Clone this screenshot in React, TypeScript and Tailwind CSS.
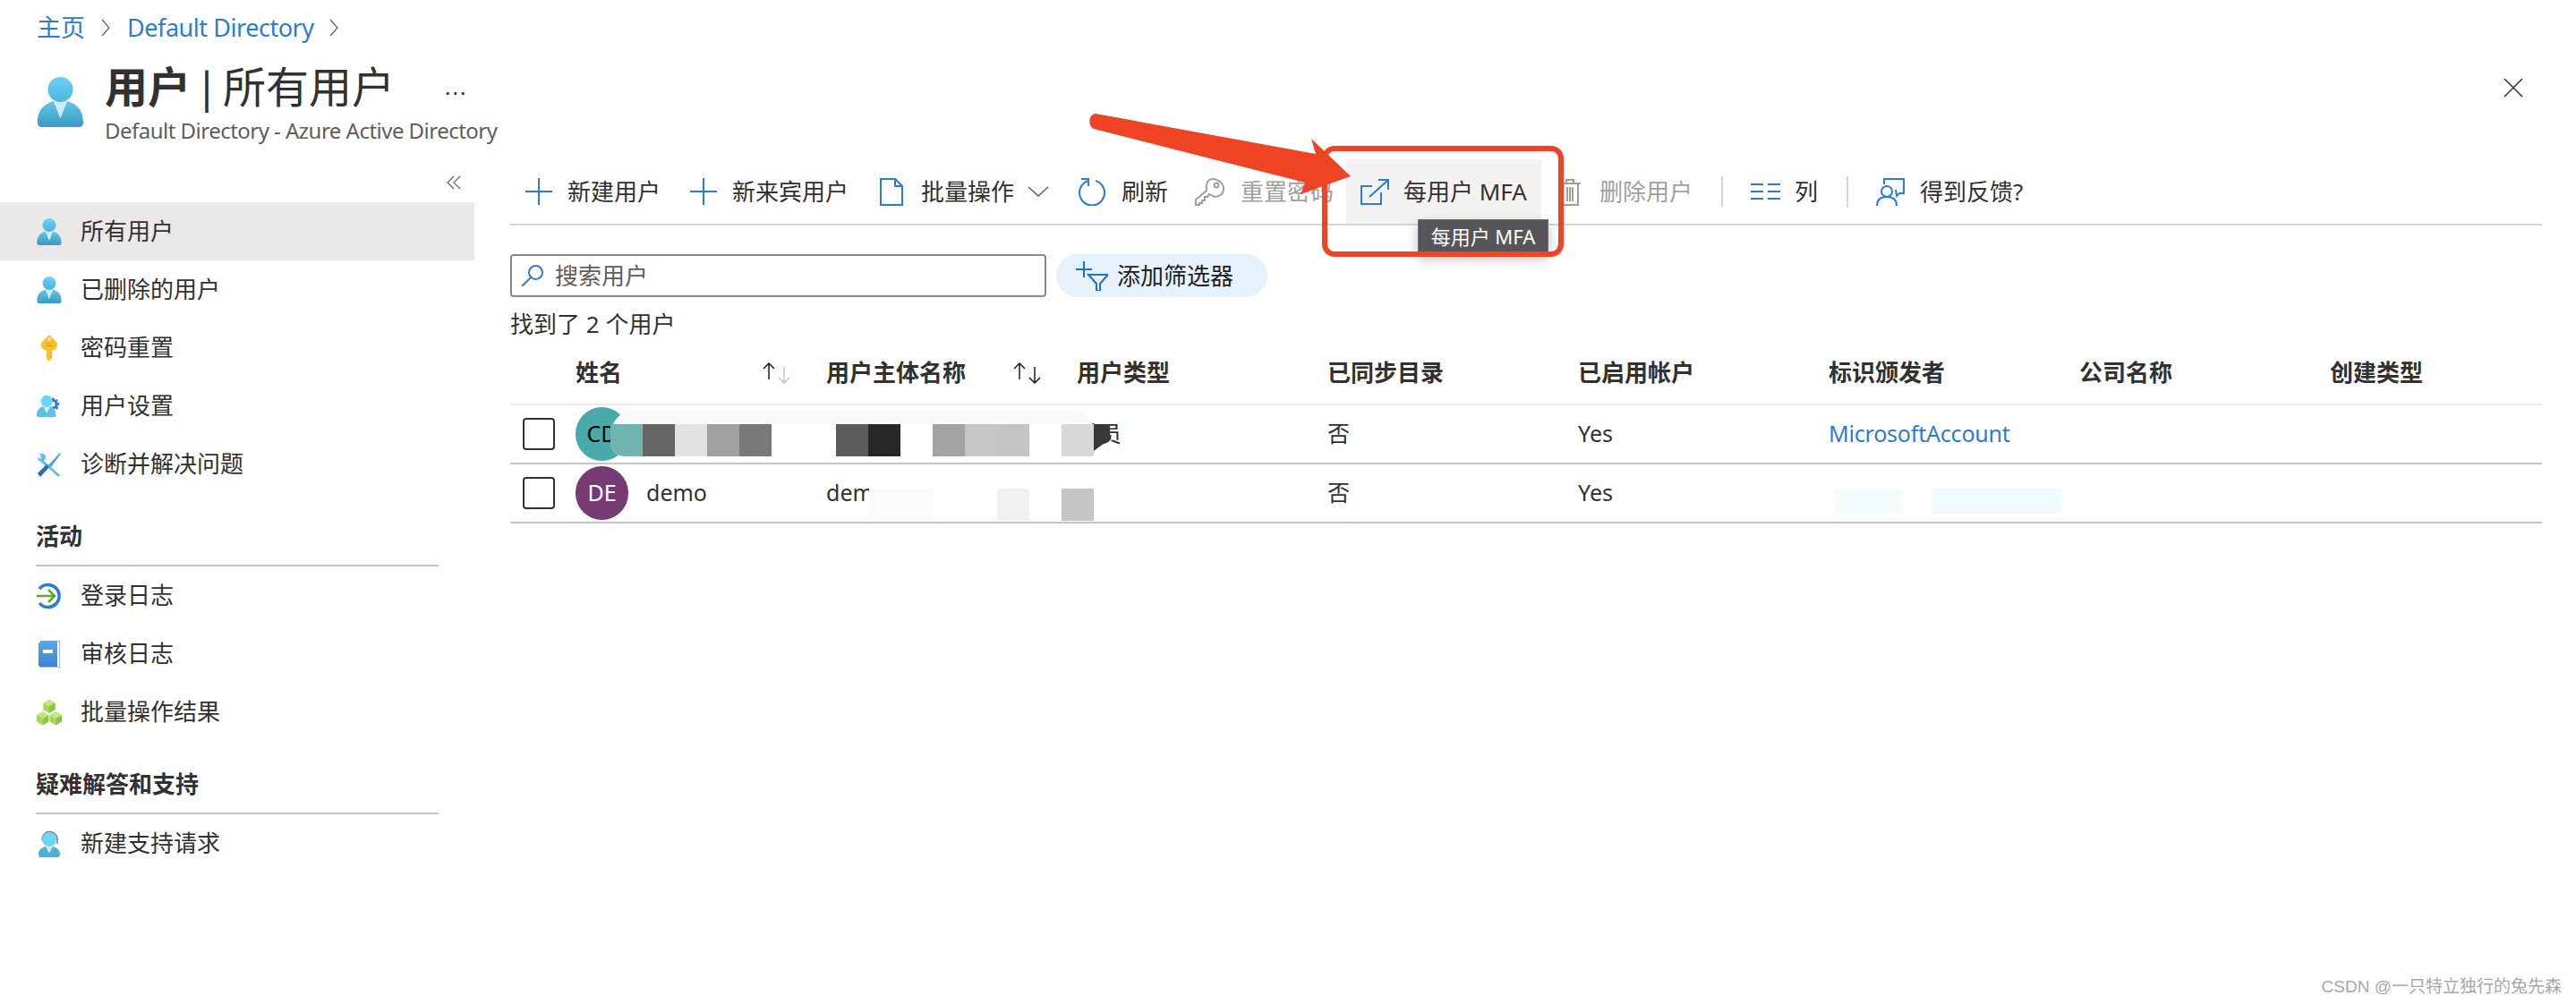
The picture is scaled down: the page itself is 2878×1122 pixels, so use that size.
const sans = "font-['Noto_Sans','Noto_Sans_CJK_SC',sans-serif]";

function UserIcon({ className }: { className: string }) {
  return (
    <svg viewBox="0 0 51 56" className={className}>
      <defs>
        <linearGradient id="headFill" x1="0" y1="0" x2="0" y2="1">
          <stop offset="0" stopColor="#6dd4f6" />
          <stop offset="1" stopColor="#4cb4dd" />
        </linearGradient>
        <linearGradient id="bodyFill" x1="0" y1="0" x2="0" y2="1">
          <stop offset="0" stopColor="#62c8ea" />
          <stop offset="1" stopColor="#3a9ac2" />
        </linearGradient>
      </defs>
      <path d="M0 51C0 36 8 30 18 27L25.5 46L33 27C43 30 51 36 51 51C51 54 49 56 46 56H5C2 56 0 54 0 51Z" fill="url(#bodyFill)" />
      <path d="M18 27H33L25.5 46Z" fill="#cfecf6" />
      <circle cx="25.5" cy="14" r="14" fill="url(#headFill)" />
    </svg>
  );
}

function KeyIcon() {
  return (
    <svg viewBox="0 0 20 30" className="w-[20px] h-[30px]">
      <path d="M10 0L19 9V12C19 15 15 18 13 18V25L10 30L7 27V18C4 17 1 15 1 12V9Z" fill="#fcc02d" />
      <path d="M6 10H14M6 12.5H14" stroke="#d99a10" strokeWidth="1" />
      <circle cx="10" cy="5" r="1.5" fill="#fff" />
      <path d="M13 21H11M13 25H11" stroke="#d99a10" strokeWidth="1" />
    </svg>
  );
}

function UserGearIcon() {
  return (
    <svg viewBox="0 0 30 26" className="w-[30px] h-[26px]">
      <path d="M19 3L21 3L21.5 5.5L24 4.5L25.5 6L24 8L27 9L27 11.5L24.5 12.5L26 15L24 17L21.5 15.5L20 18L18 18V3Z" fill="#2b7cd3" />
      <circle cx="19" cy="10.5" r="3" fill="#fff" />
      <path d="M0 24C0 17 4 14 8 13L12 21L16 13C20 14 23 17 23 24C23 25 22 26 21 26H2C1 26 0 25 0 24Z" fill="#5cc3e6" />
      <path d="M8 13H16L12 21Z" fill="#cfecf6" />
      <circle cx="12" cy="7" r="7" fill="#6dd4f6" />
    </svg>
  );
}

function ToolsIcon() {
  return (
    <svg viewBox="0 0 28 28" className="w-[28px] h-[28px]">
      <path d="M6 2C3 1 1 3 1 6L5 8L27 27L24 27L3 10C0 8 0 2 6 2Z" fill="#5dc1e6" />
      <path d="M4 2C7 1 10 3 10 6C10 8 9 9 8 10L25 25L24 28L5 9Z" fill="#5dc1e6" />
      <path d="M1 24L4 28L14 17L11 14Z" fill="#2b6cb0" />
      <path d="M13 15L26 1L27 2L16 17Z" fill="#4a9fd4" />
    </svg>
  );
}

function LoginIcon() {
  return (
    <svg viewBox="0 0 28 30" className="w-[28px] h-[30px]">
      <path d="M3 7A12.5 12.5 0 1 1 3 23" fill="none" stroke="#2b7cd3" strokeWidth="3.5" />
      <path d="M0 15H19M13 8L20 15L13 22" fill="none" stroke="#62a52d" strokeWidth="2.5" />
    </svg>
  );
}

function BookIcon() {
  return (
    <svg viewBox="0 0 24 30" className="w-[24px] h-[30px]">
      <defs>
        <linearGradient id="bookFill" x1="0" y1="0" x2="0" y2="1">
          <stop offset="0" stopColor="#5ea7e6" />
          <stop offset="1" stopColor="#3a85d6" />
        </linearGradient>
      </defs>
      <path d="M3 0H24V30H3Z" fill="#fff" stroke="#2b7cd3" strokeWidth="1" />
      <path d="M0 3L3 0H21V29H2L0 28Z" fill="url(#bookFill)" />
      <rect x="5" y="10" width="11" height="4" fill="#fff" />
    </svg>
  );
}

function CubesIcon() {
  const cube = (x: number, y: number) => (
    <g transform={`translate(${x} ${y})`}>
      <path d="M7 0L14 4L7 8L0 4Z" fill="#c2e57e" />
      <path d="M0 4L7 8V16L0 12Z" fill="#a6d65a" />
      <path d="M14 4L7 8V16L14 12Z" fill="#8cc63f" />
    </g>
  );
  return (
    <svg viewBox="0 0 29 30" className="w-[29px] h-[30px]">
      {cube(7.5, 0)}
      {cube(0, 14)}
      {cube(15, 14)}
    </svg>
  );
}

function SupportIcon() {
  return (
    <svg viewBox="0 0 24 30" className="w-[24px] h-[30px]">
      <path d="M4 11A8.5 8.5 0 0 1 21 9V15" fill="none" stroke="#7a7a7a" strokeWidth="1.5" />
      <path d="M0 27C0 21 4 19 8 18L12 25L16 18C20 19 24 21 24 27C24 29 23 30 21 30H3C1 30 0 29 0 27Z" fill="#4cb0d8" />
      <path d="M8 18H16L12 25Z" fill="#cfecf6" />
      <circle cx="12" cy="10" r="8" fill="#6dd4f6" />
    </svg>
  );
}

function NavItem({ icon, label, active }: { icon: React.ReactNode; label: string; active?: boolean }) {
  return (
    <div className={`flex items-center h-[65px] pl-[41px] ${active ? "bg-[#ebe9e8]" : ""}`}>
      <div className="w-[28px] flex justify-center">{icon}</div>
      <span className="ml-[21px] text-[26px] text-[#323130]">{label}</span>
    </div>
  );
}

function NavHeading({ label }: { label: string }) {
  return (
    <div className="mx-[40px] h-[82px] pt-[30px] border-b-2 border-[#c8c6c4] text-[26px] leading-[36px] font-semibold text-[#323130]">
      {label}
    </div>
  );
}

function Sidebar() {
  const person = <UserIcon className="w-[28px] h-[30px]" />;
  return (
    <aside className="w-[530px] shrink-0">
      <div className="h-[48px] flex justify-end pr-[15px] pt-[18px]">
        <svg viewBox="0 0 16 16" className="w-[16px] h-[16px]" fill="none" stroke="#605e5c" strokeWidth="1.2">
          <path d="M8 1L1 8L8 15M15 1L8 8L15 15" />
        </svg>
      </div>
      <NavItem icon={person} label="所有用户" active />
      <NavItem icon={person} label="已删除的用户" />
      <NavItem icon={<KeyIcon />} label="密码重置" />
      <NavItem icon={<UserGearIcon />} label="用户设置" />
      <NavItem icon={<ToolsIcon />} label="诊断并解决问题" />
      <NavHeading label="活动" />
      <NavItem icon={<LoginIcon />} label="登录日志" />
      <NavItem icon={<BookIcon />} label="审核日志" />
      <NavItem icon={<CubesIcon />} label="批量操作结果" />
      <NavHeading label="疑难解答和支持" />
      <NavItem icon={<SupportIcon />} label="新建支持请求" />
    </aside>
  );
}

const blue = "#2b7cd3";
const grey = "#a19f9d";

function PlusIcon() {
  return (
    <svg viewBox="0 0 30 30" className="w-[30px] h-[30px]" stroke={blue} strokeWidth="2">
      <path d="M15 0V30M0 15H30" />
    </svg>
  );
}

function Toolbar() {
  return (
    <div className="flex items-center h-[74px] border-b-2 border-[#d5d5d5] text-[26px] text-[#323130] relative">
      <div className="flex items-center w-[184px] h-full pl-[17px] gap-[17px]">
        <PlusIcon />
        <span>新建用户</span>
      </div>
      <div className="flex items-center w-[212px] h-full pl-[17px] gap-[17px]">
        <PlusIcon />
        <span>新来宾用户</span>
      </div>
      <div className="flex items-center w-[221px] h-full pl-[17px] gap-[20px]">
        <svg viewBox="0 0 26 31" className="w-[26px] h-[31px]" fill="none" stroke={blue} strokeWidth="2">
          <path d="M1 1H17L25 9V30H1ZM17 1V9H25" />
        </svg>
        <span>批量操作</span>
        <svg viewBox="0 0 24 12" className="w-[24px] h-[12px] ml-[-5px]" fill="none" stroke="#605e5c" strokeWidth="1.5">
          <path d="M1 1L12 11L23 1" />
        </svg>
      </div>
      <div className="flex items-center w-[133px] h-full pl-[16px] gap-[18px]">
        <svg viewBox="0 0 32 31" className="w-[32px] h-[31px]" fill="none" stroke={blue} strokeWidth="2">
          <path d="M13 3A14 14 0 1 0 21 3M5 1H13V9" />
        </svg>
        <span>刷新</span>
      </div>
      <div className="flex items-center w-[184px] h-full pl-[15px] gap-[18px] text-[#a19f9d]">
        <svg viewBox="0 0 33 31" className="w-[33px] h-[31px]" fill="none" stroke={grey} strokeWidth="2">
          <path d="M20 1C26 1 32 6 32 12C32 18 27 21 22 21L16 18L14 21H11V25H8V28H5V30H1V24L13 14C12 7 14 1 20 1Z" />
          <circle cx="24" cy="8" r="2.5" />
        </svg>
        <span>重置密码</span>
      </div>
      <div className="flex items-center w-[218px] h-[72px] pl-[16px] gap-[16px] bg-[#f3f2f1] relative">
        <svg viewBox="0 0 32 29" className="w-[32px] h-[29px]" fill="none" stroke={blue} strokeWidth="2">
          <path d="M13 8H1V28H23V15M10 20L31 1M20 1H31V12" />
        </svg>
        <span>每用户 MFA</span>
        <div className="absolute left-[80px] top-[67px] w-[146px] h-[38px] bg-[#57555a] border border-[#6e6d71] text-white text-[22px] flex items-center justify-center shadow-[0_6px_14px_rgba(0,0,0,0.25)]">
          每用户 MFA
        </div>
      </div>
      <div className="flex items-center w-[201px] h-full pl-[20px] gap-[21px] text-[#a19f9d]">
        <svg viewBox="0 0 24 31" className="w-[24px] h-[31px]" fill="none" stroke={grey} strokeWidth="2">
          <path d="M0 6H24M8 6V2H16V6M3 6V30H21V6M9 10V26M12 10V26M15 10V26" />
        </svg>
        <span>删除用户</span>
      </div>
      <div className="w-[2px] h-[34px] bg-[#d5d5d5]" />
      <div className="flex items-center w-[138px] h-full pl-[31px] gap-[16px]">
        <svg viewBox="0 0 33 18" className="w-[33px] h-[18px]" stroke={blue} strokeWidth="2">
          <path d="M0 1H14M19 1H33M0 9H14M19 9H33M0 17H14M19 17H33" />
        </svg>
        <span>列</span>
      </div>
      <div className="w-[2px] h-[34px] bg-[#d5d5d5]" />
      <div className="flex items-center h-full pl-[31px] gap-[17px]">
        <svg viewBox="0 0 32 31" className="w-[32px] h-[31px]" fill="none" stroke={blue} strokeWidth="2">
          <path d="M9 7V1H31V17H26L23 20L22 13" />
          <circle cx="12" cy="15" r="6" />
          <path d="M1 31C1 24 5 21 12 21C19 21 23 24 23 31" />
        </svg>
        <span>得到反馈?</span>
      </div>
    </div>
  );
}

function FilterRow() {
  return (
    <div className="flex items-center gap-[11px] mt-[32px] text-[26px]">
      <div className="flex items-center w-[599px] h-[48px] border-2 border-[#8a8886] rounded-[4px] pl-[10px] gap-[13px] text-[#605e5c]">
        <svg viewBox="0 0 25 24" className="w-[25px] h-[24px]" fill="none" stroke={blue} strokeWidth="2">
          <circle cx="16.5" cy="8.5" r="7.5" />
          <path d="M11 14L1 24" />
        </svg>
        <span>搜索用户</span>
      </div>
      <div className="flex items-center w-[236px] h-[48px] bg-[#e5f1fb] rounded-full pl-[22px] gap-[10px] text-[#201f1e]">
        <svg viewBox="0 0 36 33" className="w-[36px] h-[33px]" fill="none" stroke="#1f6fd0" strokeWidth="2">
          <path d="M9 0V18M0 9H18M14 15H36L27 25V33H23V25Z" />
        </svg>
        <span>添加筛选器</span>
      </div>
    </div>
  );
}

function SortIcon({ dim }: { dim?: boolean }) {
  return (
    <svg viewBox="0 0 32 24" className="w-[32px] h-[24px]" fill="none" strokeWidth="1.5">
      <path d="M7 19V1M1 7L7 1L13 7" stroke="#201f1e" />
      <path d="M24 5V23M18 17L24 23L30 17" stroke={dim ? "#c8c6c4" : "#201f1e"} />
    </svg>
  );
}

const cols = "grid grid-cols-[73px_repeat(7,280px)_1fr] items-center";

const rowOneBlocks = [
  "w-[36px] bg-[#70b5ad] rounded-bl-2xl",
  "w-[36px] bg-[#656565]",
  "w-[36px] bg-[#e2e2e2]",
  "w-[36px] bg-[#a0a0a0]",
  "w-[36px] bg-[#797979]",
  "w-[72px] bg-white",
  "w-[36px] bg-[#5c5c5c]",
  "w-[36px] bg-[#282828]",
  "w-[36px] bg-white",
  "w-[36px] bg-[#a3a3a3]",
  "w-[36px] bg-[#c6c6c6]",
  "w-[36px] bg-[#c4c4c4]",
  "w-[36px] bg-white",
  "w-[36px] bg-[#d8d8d8]",
];

function Checkbox() {
  return <div className="ml-[14px] w-[36px] h-[36px] border-2 border-[#323130] rounded-[4px]" />;
}

function Avatar({ text, className }: { text: string; className: string }) {
  return (
    <div className={`w-[59px] h-[60px] rounded-full flex items-center justify-center text-[25px] ${className}`}>{text}</div>
  );
}

function UsersTable() {
  const heading = "text-[26px] font-semibold text-[#323130]";
  return (
    <div className="mt-[4px] text-[25px] text-[#323130]">
      <div className={`${cols} h-[71px] border-b-2 border-[#edebe9]`}>
        <div />
        <div className={`${heading} flex items-center justify-between w-[241px]`}>
          <span>姓名</span>
          <SortIcon dim />
        </div>
        <div className={`${heading} flex items-center justify-between w-[241px]`}>
          <span>用户主体名称</span>
          <SortIcon />
        </div>
        <div className={heading}>用户类型</div>
        <div className={heading}>已同步目录</div>
        <div className={heading}>已启用帐户</div>
        <div className={heading}>标识颁发者</div>
        <div className={heading}>公司名称</div>
        <div className={heading}>创建类型</div>
      </div>

      <div className={`${cols} h-[66px] border-b-2 border-[#c8c6c4] relative`}>
        <Checkbox />
        <div><Avatar text="CD" className="bg-[#4aa9a9] text-black" /></div>
        <div />
        <div>成员</div>
        <div>否</div>
        <div>Yes</div>
        <div className="text-[#2b7cd3] tracking-[-0.2px]">MicrosoftAccount</div>
        <div />
        <div />
        <div className="absolute left-[112px] top-[5px] w-[540px] h-[52px] bg-[#fafafa] rounded-tl-[28px] rounded-bl-2xl rounded-tr-[24px]">
          <div className="absolute left-0 top-[16px] h-[36px] flex">
            {rowOneBlocks.map((block, i) => (
              <div key={i} className={block} />
            ))}
          </div>
        </div>
        <div className="absolute left-[652px] top-[21px] w-[18px] h-[30px] bg-[#383838] [clip-path:polygon(0_0,100%_0,100%_55%,0_100%)]" />
      </div>

      <div className={`${cols} h-[66px] border-b-2 border-[#c8c6c4] relative`}>
        <Checkbox />
        <div className="flex items-center gap-[20px]">
          <Avatar text="DE" className="bg-[#773b73] text-white" />
          <span>demo</span>
        </div>
        <div>dem</div>
        <div />
        <div>否</div>
        <div>Yes</div>
        <div />
        <div />
        <div />
        <div className="absolute left-[401px] top-[27px] w-[71px] h-[36px] bg-[#fbfbfb] rounded-bl-xl" />
        <div className="absolute left-[544px] top-[27px] w-[36px] h-[36px] bg-[#f1f1f1]" />
        <div className="absolute left-[616px] top-[27px] w-[36px] h-[36px] bg-[#c4c4c4]" />
        <div className="absolute left-[1481px] top-[27px] w-[75px] h-[28px] bg-[#f4fdfe]" />
        <div className="absolute left-[1589px] top-[27px] w-[144px] h-[28px] bg-[#effcfe]" />
      </div>
    </div>
  );
}

function Annotation() {
  return (
    <>
      <div className="absolute left-[1477px] top-[163px] w-[270px] h-[124px] border-[6px] border-[#ef4423] rounded-[14px]" />
      <svg className="absolute left-0 top-0 w-[2878px] h-[300px] pointer-events-none" viewBox="0 0 2878 300">
        <path d="M1224 127L1470 172L1465 155L1509 197L1453 217L1458 204L1222 144C1216 142 1215 128 1224 127Z" fill="#ef4423" />
      </svg>
    </>
  );
}

export default function App() {
  return (
    <div className={`${sans} relative w-[2878px] h-[1122px] bg-white overflow-hidden`}>
      <nav className="h-[62px] flex items-center pl-[41px] text-[27px] text-[#2b7cd3]">
        <span>主页</span>
        <svg viewBox="0 0 10 20" className="w-[10px] h-[20px] ml-[18px]" fill="none" stroke="#605e5c" strokeWidth="1.2">
          <path d="M1 1L9 10L1 19" />
        </svg>
        <span className="ml-[19px] tracking-[-0.45px]">Default Directory</span>
        <svg viewBox="0 0 10 20" className="w-[10px] h-[20px] ml-[17px]" fill="none" stroke="#605e5c" strokeWidth="1.2">
          <path d="M1 1L9 10L1 19" />
        </svg>
      </nav>

      <header className="h-[116px] flex items-start justify-between pl-[42px] pr-[59px]">
        <div className="flex">
          <UserIcon className="w-[51px] h-[56px] mt-[24px]" />
          <div className="ml-[24px] mt-[8px]">
            <div className="flex items-center h-[54px]">
              <h1 className="flex text-[48px] leading-[54px] text-[#323130]">
                <span className="font-semibold">用户</span>
                <span className="w-[36px] text-center">|</span>
                <span>所有用户</span>
              </h1>
              <span className="ml-[56px] text-[24px] leading-[24px] tracking-[2px] text-[#323130]">...</span>
            </div>
            <div className="mt-[6px] text-[24px] leading-[32px] tracking-[-0.52px] text-[#605e5c]">Default Directory - Azure Active Directory</div>
          </div>
        </div>
        <svg viewBox="0 0 22 22" className="w-[22px] h-[22px] mt-[25px]" fill="none" stroke="#323130" strokeWidth="1.5">
          <path d="M1 1L21 21M21 1L1 21" />
        </svg>
      </header>

      <div className="flex">
        <Sidebar />
        <main className="flex-1 pl-[40px] pr-[38px]">
          <Toolbar />
          <FilterRow />
          <div className="mt-[14px] h-[32px] leading-[32px] text-[26px] text-[#323130] whitespace-pre">找到了 2 个用户</div>
          <UsersTable />
        </main>
      </div>

      <Annotation />

      <div className="absolute right-[16px] top-[1090px] text-[19px] leading-[26px] text-[#a8a8a8] font-['Liberation_Sans','Noto_Sans_CJK_SC',sans-serif]">
        CSDN @一只特立独行的兔先森
      </div>
    </div>
  );
}
